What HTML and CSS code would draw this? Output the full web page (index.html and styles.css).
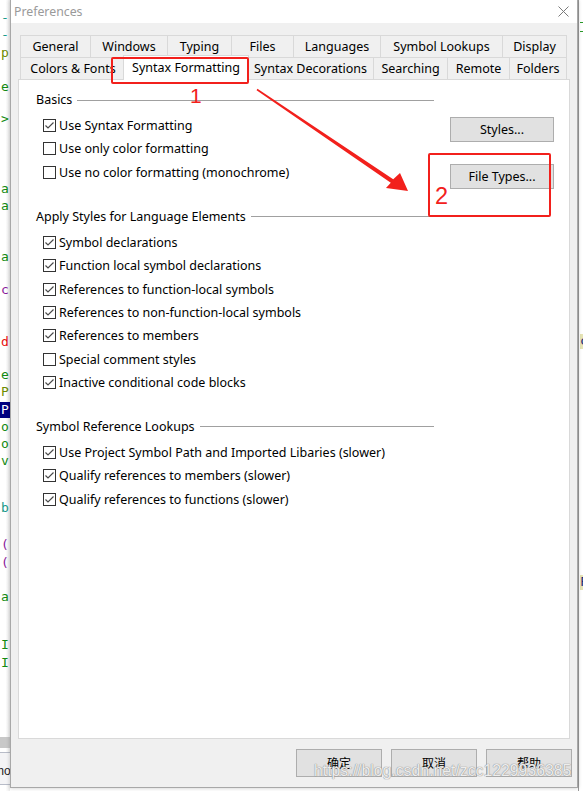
FILE: index.html
```html
<!DOCTYPE html>
<html>
<head>
<meta charset="utf-8">
<title>Preferences</title>
<link rel="stylesheet" href="styles.css">
</head>
<body>
<div class="screen">
  <div class="editor editor-left">
    <span class="g g1 teal">-</span>
    <span class="g g2 teal">-</span>
    <span class="g g3 olive">p</span>
    <span class="g g4 green">e</span>
    <span class="g g5 green">&gt;</span>
    <span class="g g6 green">a</span>
    <span class="g g7 green">a</span>
    <span class="g g8 green">a</span>
    <span class="g g9 purple">c</span>
    <span class="g g10 red">d</span>
    <span class="g g11 green">e</span>
    <span class="g g12 olive">P</span>
    <span class="g g13 sel">P</span>
    <span class="g g14 green">o</span>
    <span class="g g15 green">o</span>
    <span class="g g16 green">v</span>
    <span class="g g17 teal">b</span>
    <span class="g g18 purple">(</span>
    <span class="g g19 purple">(</span>
    <span class="g g20 green">a</span>
    <span class="g g21 green">I</span>
    <span class="g g22 green">I</span>
    <div class="ed-band"></div>
    <div class="ed-tab">mo</div>
  </div>

  <div class="dialog">
    <div class="titlebar">
      <span class="title">Preferences</span>
      <svg class="close" width="11" height="11" viewBox="0 0 11 11"><path d="M0.5 0.5 L10.5 10.5 M10.5 0.5 L0.5 10.5" stroke="#7a7a7a" stroke-width="1" fill="none"/></svg>
    </div>
    <div class="dlg-body">
      <div class="tabs">
        <div class="tabrow">
          <div class="tab t-general">General</div>
          <div class="tab t-windows">Windows</div>
          <div class="tab t-typing">Typing</div>
          <div class="tab t-files">Files</div>
          <div class="tab t-languages">Languages</div>
          <div class="tab t-lookups">Symbol Lookups</div>
          <div class="tab t-display">Display</div>
        </div>
        <div class="tabrow">
          <div class="tab t-colors">Colors &amp; Fonts</div>
          <div class="tab tab-active">Syntax Formatting</div>
          <div class="tab t-decor">Syntax Decorations</div>
          <div class="tab t-search">Searching</div>
          <div class="tab t-remote">Remote</div>
          <div class="tab t-folders">Folders</div>
        </div>
      </div>

      <div class="panel">
        <div class="group">
          <div class="group-head"><span>Basics</span></div>
          <div class="group-body">
            <div class="checks">
              <div class="check"><span class="box on"><svg viewBox="0 0 11 11"><path d="M1.5 5.5 L4 8 L9.5 2.5"/></svg></span>Use Syntax Formatting</div>
              <div class="check"><span class="box"></span>Use only color formatting</div>
              <div class="check"><span class="box"></span>Use no color formatting (monochrome)</div>
            </div>
            <div class="side">
              <div class="btn btn-side">Styles...</div>
              <div class="btn btn-side">File Types...</div>
            </div>
          </div>
        </div>

        <div class="group">
          <div class="group-head"><span>Apply Styles for Language Elements</span></div>
          <div class="group-body">
            <div class="checks">
              <div class="check"><span class="box on"><svg viewBox="0 0 11 11"><path d="M1.5 5.5 L4 8 L9.5 2.5"/></svg></span>Symbol declarations</div>
              <div class="check"><span class="box on"><svg viewBox="0 0 11 11"><path d="M1.5 5.5 L4 8 L9.5 2.5"/></svg></span>Function local symbol declarations</div>
              <div class="check"><span class="box on"><svg viewBox="0 0 11 11"><path d="M1.5 5.5 L4 8 L9.5 2.5"/></svg></span>References to function-local symbols</div>
              <div class="check"><span class="box on"><svg viewBox="0 0 11 11"><path d="M1.5 5.5 L4 8 L9.5 2.5"/></svg></span>References to non-function-local symbols</div>
              <div class="check"><span class="box on"><svg viewBox="0 0 11 11"><path d="M1.5 5.5 L4 8 L9.5 2.5"/></svg></span>References to members</div>
              <div class="check"><span class="box"></span>Special comment styles</div>
              <div class="check"><span class="box on"><svg viewBox="0 0 11 11"><path d="M1.5 5.5 L4 8 L9.5 2.5"/></svg></span>Inactive conditional code blocks</div>
            </div>
          </div>
        </div>

        <div class="group">
          <div class="group-head"><span>Symbol Reference Lookups</span></div>
          <div class="group-body">
            <div class="checks">
              <div class="check"><span class="box on"><svg viewBox="0 0 11 11"><path d="M1.5 5.5 L4 8 L9.5 2.5"/></svg></span>Use Project Symbol Path and Imported Libaries (slower)</div>
              <div class="check"><span class="box on"><svg viewBox="0 0 11 11"><path d="M1.5 5.5 L4 8 L9.5 2.5"/></svg></span>Qualify references to members (slower)</div>
              <div class="check"><span class="box on"><svg viewBox="0 0 11 11"><path d="M1.5 5.5 L4 8 L9.5 2.5"/></svg></span>Qualify references to functions (slower)</div>
            </div>
          </div>
        </div>
      </div>

      <div class="footer">
        <div class="btn btn-foot">确定</div>
        <div class="btn btn-foot">取消</div>
        <div class="btn btn-foot">帮助</div>
      </div>
    </div>
  </div>

  <div class="editor editor-right">
    <span class="rdash rd1"></span>
    <span class="rdash rd2"></span>
    <span class="rg rg1">c</span>
    <span class="rg rg2">F</span>
  </div>

  <div class="mark mark-rect1"></div>
  <div class="mark mark-rect2"></div>
  <div class="mark-num num1">1</div>
  <div class="mark-num num2">2</div>
  <svg class="mark-arrow" width="583" height="791" viewBox="0 0 583 791">
    <polygon points="257.45,88.84 393.23,179.18 400,173 408,191 386,188 390.77,182.82 256.55,90.16" fill="#f2201c"/>
  </svg>
  <div class="watermark">https://blog.csdn.net/zcc1229936385</div>
</div>
</body>
</html>
```

FILE: styles.css
```css
* { box-sizing: border-box; }
html, body { margin: 0; padding: 0; }
body {
  width: 583px;
  height: 791px;
  overflow: hidden;
  background: #ffffff;
  font-family: "Noto Sans", "Noto Sans CJK SC", sans-serif;
  font-size: 12.5px;
  color: #000;
}
.screen {
  position: relative;
  display: grid;
  grid-template-columns: 10px 568px 5px;
  height: 791px;
}

/* background editor glimpses */
.editor {
  position: relative;
  overflow: hidden;
  background: #fff;
  font-family: "DejaVu Sans Mono", monospace;
  font-size: 13px;
}
.editor-left { background: linear-gradient(to right, #fff 0, #fff 55%, #ececec 100%); }
.g { position: absolute; left: 1px; line-height: 16px; height: 16px; }
.teal { color: #1a9a8a; }
.olive { color: #6c8c00; }
.green { color: #128a12; }
.purple { color: #8a1a9a; }
.red { color: #e81010; }
.sel { color: #fff; background: #000080; left: 0; width: 12px; padding-left: 1px; }
.g1 { top: 10px; } .g2 { top: 27px; } .g3 { top: 45px; } .g4 { top: 79px; }
.g5 { top: 111px; } .g6 { top: 181px; } .g7 { top: 198px; } .g8 { top: 249px; }
.g9 { top: 282px; } .g10 { top: 334px; } .g11 { top: 367px; } .g12 { top: 384px; }
.g13 { top: 402px; } .g14 { top: 419px; } .g15 { top: 436px; } .g16 { top: 453px; }
.g17 { top: 500px; } .g18 { top: 537px; } .g19 { top: 555px; } .g20 { top: 589px; }
.g21 { top: 637px; } .g22 { top: 655px; }
.ed-band { position: absolute; left: 0; top: 737px; width: 10px; height: 11px; background: #c8c8c8; }
.ed-tab {
  position: absolute; left: -6px; top: 752px; width: 20px; height: 33px;
  border-top: 1px solid #b8bcc8; border-bottom: 1px solid #b8bcc8;
  background: #f4f4f6; font-family: "Liberation Sans", sans-serif; font-size: 12px;
  line-height: 37px; color: #222;
}
.editor-right { border-left: 1px solid #9a9a9a; }
.rdash { position: absolute; left: 1px; width: 4px; height: 1px; background: #2a9a2a; }
.rd1 { top: 22px; } .rd2 { top: 31px; }
.rg { position: absolute; left: 1px; width: 4px; background: #e6e4b6; color: #1a2a7a; font-size: 13px; line-height: 14px; height: 15px; }
.rg1 { top: 334px; } .rg2 { top: 575px; }

/* dialog */
.dialog {
  position: relative;
  z-index: 1;
  height: 788px;
  background: #f0f0f0;
  border: 1px solid #a8a8a8;
  border-top: none;
  box-shadow: 0 0 4px rgba(0,0,0,0.22);
  display: flex;
  flex-direction: column;
}
.titlebar {
  height: 23px;
  flex: none;
  background: #fff;
  display: flex;
  align-items: center;
  justify-content: space-between;
  padding: 0 8px 0 3px;
}
.title { color: #9a9a9a; font-size: 12.3px; }
.close { display: block; }

.dlg-body {
  flex: 1;
  display: flex;
  flex-direction: column;
  padding: 12px 7px 0 7px;
}
.tabs { padding-left: 2px; flex: none; }
.tabrow { display: flex; height: 22px; }
.tab {
  height: 22px;
  flex: none;
  display: flex;
  align-items: center;
  justify-content: center;
  white-space: nowrap;
  background: #f0f0f0;
  border-top: 1px solid #d9d9d9;
  border-left: 1px solid #d9d9d9;
}
.tab:last-child { border-right: 1px solid #d9d9d9; }
.t-general { width: 70px; } .t-windows { width: 77px; } .t-typing { width: 64px; }
.t-files { width: 62px; } .t-languages { width: 87px; } .t-lookups { width: 122px; }
.t-display { width: 65px; }
.t-colors { width: 105px; overflow: hidden; }
.tab-active {
  position: relative;
  z-index: 2;
  width: 126px;
  height: 25px;
  margin: -2px -2px 0 -2px;
  background: #fff;
  border-right: 1px solid #d9d9d9;
  padding-bottom: 2px;
}
.t-decor { width: 126px; } .t-search { width: 74px; } .t-remote { width: 62px; } .t-folders { width: 58px; }

.panel {
  flex: none;
  height: 660px;
  background: #fff;
  border: 1px solid #d9d9d9;
  padding: 12px 0 0 17px;
}
.group + .group { margin-top: 25px; }
.group-head {
  display: flex;
  align-items: center;
  width: 398px;
  height: 16px;
  line-height: 16px;
  white-space: nowrap;
}
.group-head::after {
  content: "";
  flex: 1;
  height: 1px;
  background: #a0a0a0;
  margin-left: 5px;
}
.group-body { display: flex; align-items: flex-start; padding-top: 6px; }
.checks { width: 414px; flex: none; }
.check {
  height: 23.3px;
  display: flex;
  align-items: center;
  padding-left: 7px;
  white-space: nowrap;
}
.box {
  width: 13px;
  height: 13px;
  flex: none;
  border: 1px solid #333;
  background: #fff;
  margin-right: 3px;
  display: flex;
  align-items: center;
  justify-content: center;
}
.box svg { width: 11px; height: 11px; display: block; }
.box svg path { fill: none; stroke: #4a4a4a; stroke-width: 1.2; }
.side {
  display: flex;
  flex-direction: column;
  gap: 22px;
  padding-top: 3px;
  margin-bottom: -8px;
}
.btn {
  background: #e1e1e1;
  border: 1px solid #adadad;
  display: flex;
  align-items: center;
  justify-content: center;
  white-space: nowrap;
}
.btn-side { width: 104px; height: 25px; }

.footer {
  display: flex;
  justify-content: flex-end;
  gap: 9px;
  padding-top: 10px;
  margin-right: -2px;
}
.btn-foot { width: 86px; height: 28px; font-size: 12px; }

/* annotations drawn over the screenshot */
.mark {
  position: absolute;
  z-index: 5;
  border: 2.5px solid #f2201c;
  border-radius: 2px;
}
.mark-rect1 { left: 111px; top: 57px; width: 138px; height: 27px; }
.mark-rect2 { left: 428px; top: 153px; width: 123px; height: 64px; }
.mark-num {
  position: absolute;
  z-index: 5;
  color: #f2201c;
  font-family: "Liberation Sans", sans-serif;
  line-height: 1;
}
.num1 { left: 190px; top: 85px; font-size: 21px; }
.num2 { left: 435px; top: 185px; font-size: 23.5px; }
.mark-arrow { position: absolute; left: 0; top: 0; z-index: 5; pointer-events: none; }
.watermark {
  position: absolute;
  z-index: 6;
  left: 314px;
  top: 762px;
  font-family: "Liberation Sans", sans-serif;
  font-size: 15.8px;
  line-height: 18px;
  color: rgba(255,255,255,0.85);
  text-shadow: 0 0 1px #8a8a8a, 0 0 1px #8a8a8a;
  white-space: nowrap;
}
```
